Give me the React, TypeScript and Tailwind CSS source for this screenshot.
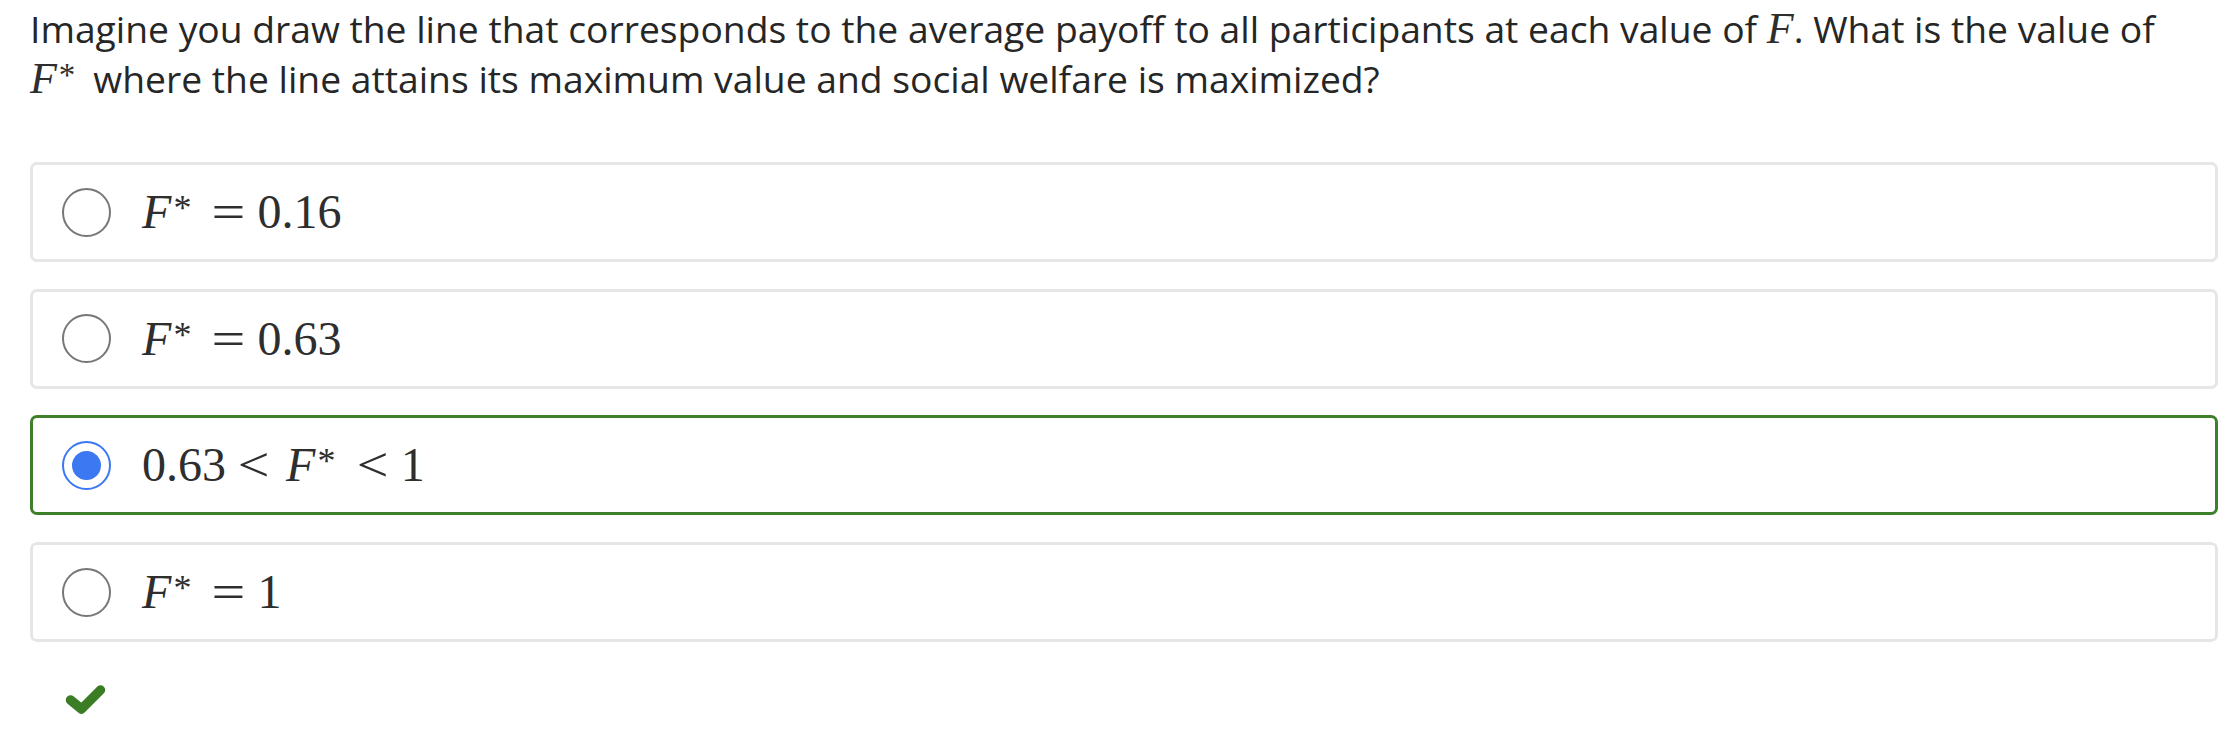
import React from "react";

function MF({ star = false }: { star?: boolean }) {
  return (
    <span className="whitespace-nowrap">
      <span className="italic">F</span>
      {star && <span className="ml-[0.06em] align-[0.22em] text-[0.75em]">*</span>}
    </span>
  );
}

function Radio({ checked }: { checked: boolean }) {
  if (checked) {
    return (
      <span className="flex h-[49px] w-[49px] shrink-0 items-center justify-center rounded-full border-[2.5px] border-[#3b78f2] bg-white">
        <span className="h-[29px] w-[29px] rounded-full bg-[#3b78f2]" />
      </span>
    );
  }
  return <span className="h-[49px] w-[49px] shrink-0 rounded-full border-2 border-[#777777] bg-white" />;
}

function Option({ checked, children }: { checked: boolean; children: React.ReactNode }) {
  return (
    <div
      className={
        "flex h-[100px] items-center rounded-[7px] border-[3px] bg-white pl-[29px] " +
        (checked ? "border-[#3d7f2a]" : "border-[#e6e6e6]")
      }
    >
      <Radio checked={checked} />
      <span className="ml-[31px] whitespace-nowrap font-['Liberation_Serif','Times_New_Roman',serif] text-[48px] leading-none text-[#2e2e2e]">
        {children}
      </span>
    </div>
  );
}

function Eq() {
  return <span className="ml-[24px] inline-block scale-x-125">=</span>;
}

function Lt({ ml }: { ml: string }) {
  return <span className={ml + " inline-block scale-x-[1.17]"}>&lt;</span>;
}

export default function App() {
  return (
    <div className="min-h-[744px] w-full bg-white pl-[30px] pr-[18px] font-['Open_Sans',sans-serif] text-[#262626]">
      <div className="pt-[4px] text-[37.25px] leading-[50px]">
        <div className="h-[50px] whitespace-nowrap">
          Imagine you draw the line that corresponds to the average payoff to all participants at each value of{" "}
          <span className="font-['Liberation_Serif',serif] text-[44px] leading-none text-[#2e2e2e]">
            <MF />
          </span>
          . What is the value of
        </div>
        <div className="h-[50px] whitespace-nowrap">
          <span className="mr-[18px] font-['Liberation_Serif',serif] text-[44px] leading-none text-[#2e2e2e]">
            <MF star />
          </span>
          where the line attains its maximum value and social welfare is maximized?
        </div>
      </div>

      <div className="mt-[58px] flex flex-col gap-[26.7px]">
        <Option checked={false}>
          <MF star />
          <Eq />
          <span className="ml-[15px]">0.16</span>
        </Option>
        <Option checked={false}>
          <MF star />
          <Eq />
          <span className="ml-[15px]">0.63</span>
        </Option>
        <Option checked={true}>
          <span>0.63</span>
          <Lt ml="ml-[14px]" />
          <span className="ml-[19px]">
            <MF star />
          </span>
          <Lt ml="ml-[23px]" />
          <span className="ml-[15px]">1</span>
        </Option>
        <Option checked={false}>
          <MF star />
          <Eq />
          <span className="ml-[15px]">1</span>
        </Option>
      </div>

      <div className="mt-[39px] pl-[34px]">
        <svg width="44" height="36" viewBox="0 0 44 36" className="block">
          <polyline
            points="6.5,19 17.5,28 36.5,9"
            fill="none"
            stroke="#3b7d24"
            strokeWidth="9.5"
            strokeLinecap="round"
            strokeLinejoin="round"
          />
        </svg>
      </div>
    </div>
  );
}
